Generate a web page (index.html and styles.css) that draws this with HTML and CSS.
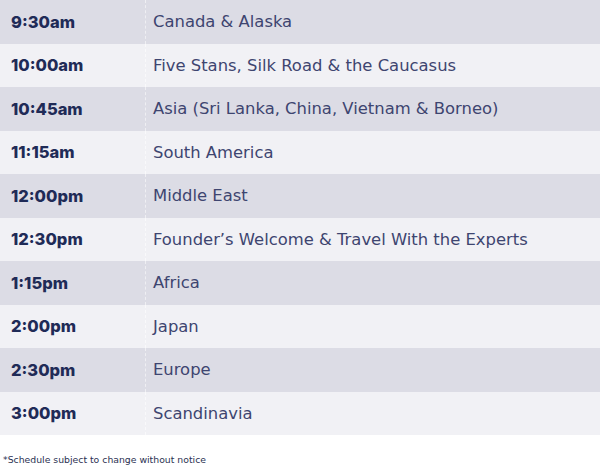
FILE: index.html
```html
<!DOCTYPE html>
<html>
<head>
<meta charset="utf-8">
<link rel="stylesheet" href="styles.css">
</head>
<body>
<div class="schedule">
  <div class="row dark"><div class="time">9:30am</div><div class="place">Canada &amp; Alaska</div></div>
  <div class="row light"><div class="time">10:00am</div><div class="place">Five Stans, Silk Road &amp; the Caucasus</div></div>
  <div class="row dark"><div class="time">10:45am</div><div class="place">Asia (Sri Lanka, China, Vietnam &amp; Borneo)</div></div>
  <div class="row light"><div class="time">11:15am</div><div class="place">South America</div></div>
  <div class="row dark"><div class="time">12:00pm</div><div class="place">Middle East</div></div>
  <div class="row light"><div class="time">12:30pm</div><div class="place">Founder’s Welcome &amp; Travel With the Experts</div></div>
  <div class="row dark"><div class="time">1:15pm</div><div class="place">Africa</div></div>
  <div class="row light"><div class="time">2:00pm</div><div class="place">Japan</div></div>
  <div class="row dark"><div class="time">2:30pm</div><div class="place">Europe</div></div>
  <div class="row light"><div class="time">3:00pm</div><div class="place">Scandinavia</div></div>
</div>
<p class="note">*Schedule subject to change without notice</p>
</body>
</html>
```
FILE: styles.css
```css
html, body {
  margin: 0;
  padding: 0;
  background: #ffffff;
}
body {
  width: 600px;
  height: 468px;
  overflow: hidden;
  font-family: "DejaVu Sans", sans-serif;
}
.schedule {
  display: flex;
  flex-direction: column;
}
.row {
  display: grid;
  grid-template-columns: 145px 1fr;
  height: 43.5px;
  align-items: stretch;
}
.dark { background: #dcdce5; }
.light { background: #f1f1f5; }
.time {
  display: flex;
  align-items: center;
  padding-left: 11px;
  font-family: Inter, "DejaVu Sans", sans-serif;
  font-weight: 800;
  font-size: 16.5px;
  color: #1f2b57;
}
.place {
  display: flex;
  align-items: center;
  padding-left: 7px;
  border-left: 1px dashed rgba(255, 255, 255, 0.55);
  font-size: 16.4px;
  color: #3e4570;
}
.note {
  margin: 0;
  padding: 19px 0 0 3px;
  font-size: 9.3px;
  color: #2b3152;
}
```
